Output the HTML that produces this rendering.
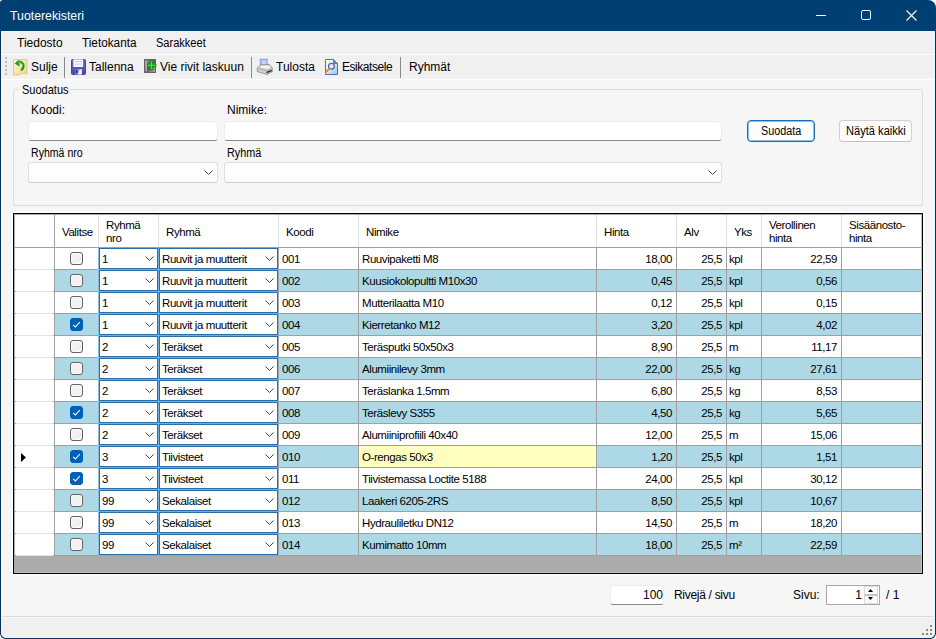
<!DOCTYPE html><html><head><meta charset="utf-8"><style>
*{box-sizing:border-box;margin:0;padding:0}
html,body{width:936px;height:639px;overflow:hidden;background:#ffffff}
body{position:relative;font-family:"Liberation Sans",sans-serif;font-size:12px;color:#000}
.a{position:absolute}
svg{display:block}
.t{position:absolute;white-space:nowrap;line-height:14px}
#win{position:absolute;left:0;top:0;width:936px;height:639px;background:#003f72;border-radius:3px 8px 6px 6px;overflow:hidden}
#client{position:absolute;left:1px;top:31px;width:934px;height:607px;background:#f6f6f6;border-left:1px solid #eaf6ff;border-top:1px solid #dcfbff;border-right:1px solid #e6f8ff;border-bottom:1px solid #f4f8fb;border-radius:0 0 5px 5px;overflow:hidden}
.chk{position:absolute;width:13px;height:13px;border:1px solid #626262;border-radius:3px;background:#f2f2f2;box-shadow:inset 0 0 0 1px #fbfbfb}
.chk.on{background:#005fb8;border-color:#005fb8;box-shadow:none}
.tb{position:absolute;background:#fff;border:1px solid #ececec;border-bottom:1px solid #8a8a8a;border-radius:3px}
.cb{position:absolute;background:#fdfdfd;border:1px solid #dedede;border-bottom-color:#cfcfcf;border-radius:3px}
.btn{position:absolute;background:#fdfdfd;border:1px solid #d0d0d0;border-bottom-color:#c0c0c0;border-radius:4px}
.g{font-size:11.5px;letter-spacing:-0.42px}
</style></head><body>
<div id="win">
<div class="t" style="left:10px;top:9px;color:#fff;font-size:12.3px">Tuoterekisteri</div>
<div class="a" style="left:816px;top:15px;width:10px;height:1px;background:#fff"></div>
<div class="a" style="left:861px;top:10px;width:10px;height:10px;border:1px solid #fff;border-radius:2px"></div>
<svg class="a" style="left:906px;top:10px" width="11" height="11" viewBox="0 0 11 11"><path d="M0.5 0.5 L10.5 10.5 M10.5 0.5 L0.5 10.5" stroke="#fff" stroke-width="1.1"/></svg>
<div class="a" style="left:0;top:31px;width:936px;height:608px;border:1px solid #0a3157;border-top:none;border-radius:0 0 6px 6px"></div>
<div id="client"></div>
</div>
<div class="a" style="left:2px;top:32px;width:932px;height:22px;background:#f0f0f0"></div>
<div class="a" style="left:2px;top:54px;width:932px;height:1px;background:#fdfdfd"></div>
<div class="t" style="left:17px;top:36px;transform:scaleX(1);transform-origin:0 0">Tiedosto</div>
<div class="t" style="left:82px;top:36px;transform:scaleX(0.98);transform-origin:0 0">Tietokanta</div>
<div class="t" style="left:156px;top:36px;transform:scaleX(0.92);transform-origin:0 0">Sarakkeet</div>
<div class="a" style="left:2px;top:55px;width:932px;height:21px;background:#f0f0f0"></div>
<div class="a" style="left:2px;top:76px;width:932px;height:3px;background:#f3f3f3"></div>
<div class="a" style="left:2px;top:79px;width:932px;height:1px;background:#fdfdfd"></div>
<div class="a" style="left:5px;top:57px;width:2px;height:2px;background:#bcbcbc"></div>
<div class="a" style="left:5px;top:61px;width:2px;height:2px;background:#bcbcbc"></div>
<div class="a" style="left:5px;top:65px;width:2px;height:2px;background:#bcbcbc"></div>
<div class="a" style="left:5px;top:69px;width:2px;height:2px;background:#bcbcbc"></div>
<div class="a" style="left:5px;top:73px;width:2px;height:2px;background:#bcbcbc"></div>
<div class="a" style="left:64px;top:57px;width:1px;height:21px;background:#8a8a8a"></div>
<div class="a" style="left:251px;top:57px;width:1px;height:21px;background:#8a8a8a"></div>
<div class="a" style="left:400px;top:57px;width:1px;height:21px;background:#8a8a8a"></div>
<svg class="a" style="left:12px;top:58px" width="17" height="18" viewBox="0 0 17 18">
<defs><linearGradient id="gy" x1="0" y1="0" x2="1" y2="1"><stop offset="0" stop-color="#fff8d0"/><stop offset="1" stop-color="#eed588"/></linearGradient></defs>
<path d="M1.5 1.5 H15 V15.5 H9 L8 17 H1.5 Z" fill="url(#gy)" stroke="#e2cc7a" stroke-width="1"/>
<path d="M5.5 4.3 C9 3.3 11.8 5.2 11.4 8.6 C11.2 10 10.6 11 9.8 11.7" fill="none" stroke="#1a961a" stroke-width="2.3" stroke-linecap="round"/>
<path d="M2.6 5.6 L7.2 1.8 L7.6 8.6 Z" fill="#1a961a"/>
<path d="M5.8 4.8 C8.5 4.2 10.5 5.4 10.5 7.8" fill="none" stroke="#7ee87e" stroke-width="1"/>
</svg>
<svg class="a" style="left:71px;top:59px" width="15" height="16" viewBox="0 0 15 16">
<defs><linearGradient id="gs" x1="0" y1="0" x2="0" y2="1"><stop offset="0" stop-color="#6868c4"/><stop offset="1" stop-color="#4a4ab0"/></linearGradient></defs>
<path d="M0.5 1.5 Q0.5 0.5 1.5 0.5 H13.5 Q14.5 0.5 14.5 1.5 V14.5 Q14.5 15.5 13.5 15.5 H1.5 Q0.5 15.5 0.5 14.5 Z" fill="url(#gs)" stroke="#4444a4" stroke-width="1"/>
<rect x="2.3" y="0.3" width="9.8" height="7.7" fill="#f6f6fc"/>
<rect x="3.5" y="2" width="7.5" height="1" fill="#c8c8d0"/>
<rect x="3.5" y="4.6" width="7.5" height="1" fill="#c8c8d0"/>
<path d="M4 15.5 V10 H11 V15.5 Z" fill="#8c8cdc"/>
<path d="M6.8 15.5 L8.6 10.6 H10.8 V15.5 Z" fill="#f6f6fc"/>
<rect x="4.6" y="10.6" width="1.9" height="3.6" fill="#2c2c94"/>
</svg>
<svg class="a" style="left:144px;top:59px" width="13" height="14" viewBox="0 0 13 14">
<defs><linearGradient id="gb" x1="0" y1="0" x2="1" y2="1"><stop offset="0" stop-color="#8a8a8a"/><stop offset="0.55" stop-color="#5a5a5a"/><stop offset="1" stop-color="#b4b4b4"/></linearGradient></defs>
<rect x="0.5" y="0.5" width="11" height="13" fill="url(#gb)" stroke="#646464" stroke-width="1"/>
<rect x="1.5" y="1.5" width="1.3" height="11" fill="#c0c0c0"/>
<path d="M7.5 1.3 V10.9 M3.1 6.2 H12.4" stroke="#129612" stroke-width="2.8"/>
<path d="M7.5 2.2 V10 M4 6.2 H11.6" stroke="#50e450" stroke-width="1.1"/>
</svg>
<svg class="a" style="left:256px;top:58px" width="18" height="18" viewBox="0 0 18 18">
<rect x="4.2" y="1.2" width="7" height="5.8" fill="#a4b4f4" stroke="#8c9ce0" stroke-width="0.8"/>
<rect x="6.2" y="2.6" width="4.2" height="4.4" fill="#c8d4ff"/>
<path d="M1.2 10.3 L5 6.5 H13.5 L16.3 9.8 V13.8 L11 16.5 L1.2 13.5 Z" fill="#d2d2d2" stroke="#8a8a8a" stroke-width="0.8"/>
<path d="M1.2 10.3 L11 12.8 L16.3 9.8" fill="none" stroke="#9c9c9c" stroke-width="0.8"/>
<path d="M5.5 7.8 H13 L15 9.8 L11 10.8 L4 9.3 Z" fill="#f2f2f2"/>
<path d="M10.5 14.6 L15.8 12.4" stroke="#262626" stroke-width="1.5"/>
</svg>
<svg class="a" style="left:323px;top:58px" width="17" height="18" viewBox="0 0 17 18">
<defs><linearGradient id="gp" x1="0" y1="0" x2="1" y2="1"><stop offset="0" stop-color="#ffffff"/><stop offset="0.4" stop-color="#e4f0fc"/><stop offset="1" stop-color="#8cc4f0"/></linearGradient></defs>
<path d="M2.5 1.5 H10.5 L14.5 5.5 V16.5 H2.5 Z" fill="url(#gp)" stroke="#5a6ca8" stroke-width="1"/>
<path d="M10.5 1.5 V5.5 H14.5 Z" fill="#6a86cc" stroke="#5a6ca8" stroke-width="0.8"/>
<circle cx="8.4" cy="8.2" r="2.9" fill="#dceeff" stroke="#56648e" stroke-width="1.2"/>
<path d="M6.2 10.6 L2.6 14.6" stroke="#d88a2a" stroke-width="1.7" stroke-linecap="round"/>
</svg>
<div class="t" style="left:31px;top:60px;letter-spacing:0">Sulje</div>
<div class="t" style="left:89px;top:60px;letter-spacing:0">Tallenna</div>
<div class="t" style="left:160px;top:60px;letter-spacing:0">Vie rivit laskuun</div>
<div class="t" style="left:276px;top:60px;letter-spacing:0">Tulosta</div>
<div class="t" style="left:342px;top:60px;letter-spacing:-0.45px">Esikatsele</div>
<div class="t" style="left:409px;top:60px;letter-spacing:0">Ryhmät</div>
<div class="a" style="left:13px;top:89px;width:910px;height:117px;border:1px solid #dcdcdc;border-radius:2px"></div>
<div class="a" style="left:19px;top:82px;width:50px;height:14px;background:#f6f6f6"></div>
<div class="t" style="left:22px;top:83px;font-size:12.8px;transform:scaleX(0.86);transform-origin:0 0">Suodatus</div>
<div class="t" style="left:31px;top:103px">Koodi:</div>
<div class="t" style="left:227px;top:103px">Nimike:</div>
<div class="tb" style="left:28px;top:121px;width:190px;height:20px"></div>
<div class="tb" style="left:224px;top:121px;width:498px;height:20px"></div>
<div class="t" style="left:31px;top:146px;transform:scaleX(0.88);transform-origin:0 0">Ryhmä nro</div>
<div class="t" style="left:227px;top:146px;transform:scaleX(0.9);transform-origin:0 0">Ryhmä</div>
<div class="cb" style="left:28px;top:162px;width:190px;height:21px"></div>
<div class="cb" style="left:224px;top:162px;width:498px;height:21px"></div>
<div class="a" style="left:204px;top:170px"><svg width="9" height="5" viewBox="0 0 9 5"><path d="M0.5 0.5 L4.5 4.5 L8.5 0.5" fill="none" stroke="#444" stroke-width="1"/></svg></div>
<div class="a" style="left:708px;top:170px"><svg width="9" height="5" viewBox="0 0 9 5"><path d="M0.5 0.5 L4.5 4.5 L8.5 0.5" fill="none" stroke="#444" stroke-width="1"/></svg></div>
<div class="btn" style="left:747px;top:120px;width:68px;height:22px;border:1px solid #1a6cb4;border-radius:4px;box-shadow:inset 0 0 0 1px #8ec0ea"></div>
<div class="t" style="left:761px;top:124px;transform:scaleX(0.9);transform-origin:0 0">Suodata</div>
<div class="btn" style="left:839px;top:120px;width:73px;height:22px"></div>
<div class="t" style="left:846px;top:124px;transform:scaleX(0.925);transform-origin:0 0">Näytä kaikki</div>
<div class="a" style="left:13px;top:213px;width:910px;height:361px;border:1px solid #000;background:#ababab"></div>
<div class="a" style="left:14px;top:214px;width:908px;height:34px;background:#fff"></div>
<div class="a" style="left:14px;top:247px;width:908px;height:1px;background:#a0a0a0"></div>
<div class="a" style="left:54px;top:214px;width:1px;height:33px;background:#a0a0a0"></div>
<div class="a" style="left:98px;top:214px;width:1px;height:33px;background:#e0e0e0"></div>
<div class="a" style="left:158px;top:214px;width:1px;height:33px;background:#e0e0e0"></div>
<div class="a" style="left:278px;top:214px;width:1px;height:33px;background:#e0e0e0"></div>
<div class="a" style="left:358px;top:214px;width:1px;height:33px;background:#e0e0e0"></div>
<div class="a" style="left:596px;top:214px;width:1px;height:33px;background:#e0e0e0"></div>
<div class="a" style="left:676px;top:214px;width:1px;height:33px;background:#e0e0e0"></div>
<div class="a" style="left:726px;top:214px;width:1px;height:33px;background:#e0e0e0"></div>
<div class="a" style="left:761px;top:214px;width:1px;height:33px;background:#e0e0e0"></div>
<div class="a" style="left:841px;top:214px;width:1px;height:33px;background:#e0e0e0"></div>
<div class="t g" style="left:62px;top:226px;line-height:13px">Valitse</div>
<div class="t g" style="left:106px;top:219px;line-height:13px">Ryhmä<br>nro</div>
<div class="t g" style="left:166px;top:226px;line-height:13px">Ryhmä</div>
<div class="t g" style="left:286px;top:226px;line-height:13px">Koodi</div>
<div class="t g" style="left:366px;top:226px;line-height:13px">Nimike</div>
<div class="t g" style="left:604px;top:226px;line-height:13px">Hinta</div>
<div class="t g" style="left:684px;top:226px;line-height:13px">Alv</div>
<div class="t g" style="left:734px;top:226px;line-height:13px">Yks</div>
<div class="t g" style="left:769px;top:219px;line-height:13px">Verollinen<br>hinta</div>
<div class="t g" style="left:849px;top:219px;line-height:13px">Sisäänosto-<br>hinta</div>
<div class="a" style="left:14px;top:248px;width:40px;height:21px;background:#fff"></div>
<div class="a" style="left:16px;top:269px;width:37px;height:1px;background:#e4e4e4"></div>
<div class="a" style="left:54px;top:248px;width:1px;height:22px;background:#a0a0a0"></div>
<div class="a" style="left:55px;top:248px;width:867px;height:21px;background:#ffffff"></div>
<div class="a" style="left:55px;top:269px;width:867px;height:1px;background:#a0a0a0"></div>
<div class="a" style="left:98px;top:248px;width:1px;height:22px;background:#a0a0a0"></div>
<div class="a" style="left:158px;top:248px;width:1px;height:22px;background:#a0a0a0"></div>
<div class="a" style="left:278px;top:248px;width:1px;height:22px;background:#a0a0a0"></div>
<div class="a" style="left:358px;top:248px;width:1px;height:22px;background:#a0a0a0"></div>
<div class="a" style="left:596px;top:248px;width:1px;height:22px;background:#a0a0a0"></div>
<div class="a" style="left:676px;top:248px;width:1px;height:22px;background:#a0a0a0"></div>
<div class="a" style="left:726px;top:248px;width:1px;height:22px;background:#a0a0a0"></div>
<div class="a" style="left:761px;top:248px;width:1px;height:22px;background:#a0a0a0"></div>
<div class="a" style="left:841px;top:248px;width:1px;height:22px;background:#a0a0a0"></div>
<div class="chk" style="left:70px;top:252px"></div>
<div class="a" style="left:98px;top:269px;width:180px;height:1px;background:#6eaee0"></div>
<div class="a" style="left:98px;top:248px;width:1px;height:22px;background:#8dbde0"></div>
<div class="a" style="left:158px;top:248px;width:1px;height:22px;background:#6eaee0"></div>
<div class="a" style="left:278px;top:248px;width:1px;height:22px;background:#98a8b4"></div>
<div class="a" style="left:99px;top:248px;width:59px;height:21px;background:#fff;border:1px solid #2a6eaa"></div>
<div class="t g" style="left:102px;top:252px">1</div>
<div class="a" style="left:145px;top:256px"><svg width="9" height="5" viewBox="0 0 9 5"><path d="M0.5 0.5 L4.5 4.5 L8.5 0.5" fill="none" stroke="#444" stroke-width="1"/></svg></div>
<div class="a" style="left:159px;top:248px;width:119px;height:21px;background:#fff;border:1px solid #2a6eaa"></div>
<div class="t g" style="left:162px;top:252px">Ruuvit ja muutterit</div>
<div class="a" style="left:265px;top:256px"><svg width="9" height="5" viewBox="0 0 9 5"><path d="M0.5 0.5 L4.5 4.5 L8.5 0.5" fill="none" stroke="#444" stroke-width="1"/></svg></div>
<div class="t g" style="left:282px;top:252px">001</div>
<div class="t g" style="left:362px;top:252px">Ruuvipaketti M8</div>
<div class="t g" style="left:597px;top:252px;width:75px;text-align:right">18,00</div>
<div class="t g" style="left:677px;top:252px;width:45px;text-align:right">25,5</div>
<div class="t g" style="left:729px;top:252px">kpl</div>
<div class="t g" style="left:762px;top:252px;width:75px;text-align:right">22,59</div>
<div class="a" style="left:14px;top:270px;width:40px;height:21px;background:#fff"></div>
<div class="a" style="left:16px;top:291px;width:37px;height:1px;background:#e4e4e4"></div>
<div class="a" style="left:54px;top:270px;width:1px;height:22px;background:#a0a0a0"></div>
<div class="a" style="left:55px;top:270px;width:867px;height:21px;background:#add8e6"></div>
<div class="a" style="left:55px;top:291px;width:867px;height:1px;background:#a0a0a0"></div>
<div class="a" style="left:98px;top:270px;width:1px;height:22px;background:#a0a0a0"></div>
<div class="a" style="left:158px;top:270px;width:1px;height:22px;background:#a0a0a0"></div>
<div class="a" style="left:278px;top:270px;width:1px;height:22px;background:#a0a0a0"></div>
<div class="a" style="left:358px;top:270px;width:1px;height:22px;background:#a0a0a0"></div>
<div class="a" style="left:596px;top:270px;width:1px;height:22px;background:#a0a0a0"></div>
<div class="a" style="left:676px;top:270px;width:1px;height:22px;background:#a0a0a0"></div>
<div class="a" style="left:726px;top:270px;width:1px;height:22px;background:#a0a0a0"></div>
<div class="a" style="left:761px;top:270px;width:1px;height:22px;background:#a0a0a0"></div>
<div class="a" style="left:841px;top:270px;width:1px;height:22px;background:#a0a0a0"></div>
<div class="chk" style="left:70px;top:274px"></div>
<div class="a" style="left:98px;top:291px;width:180px;height:1px;background:#6eaee0"></div>
<div class="a" style="left:98px;top:270px;width:1px;height:22px;background:#8dbde0"></div>
<div class="a" style="left:158px;top:270px;width:1px;height:22px;background:#6eaee0"></div>
<div class="a" style="left:278px;top:270px;width:1px;height:22px;background:#98a8b4"></div>
<div class="a" style="left:99px;top:270px;width:59px;height:21px;background:#fff;border:1px solid #2a6eaa"></div>
<div class="t g" style="left:102px;top:274px">1</div>
<div class="a" style="left:145px;top:278px"><svg width="9" height="5" viewBox="0 0 9 5"><path d="M0.5 0.5 L4.5 4.5 L8.5 0.5" fill="none" stroke="#444" stroke-width="1"/></svg></div>
<div class="a" style="left:159px;top:270px;width:119px;height:21px;background:#fff;border:1px solid #2a6eaa"></div>
<div class="t g" style="left:162px;top:274px">Ruuvit ja muutterit</div>
<div class="a" style="left:265px;top:278px"><svg width="9" height="5" viewBox="0 0 9 5"><path d="M0.5 0.5 L4.5 4.5 L8.5 0.5" fill="none" stroke="#444" stroke-width="1"/></svg></div>
<div class="t g" style="left:282px;top:274px">002</div>
<div class="t g" style="left:362px;top:274px">Kuusiokolopultti M10x30</div>
<div class="t g" style="left:597px;top:274px;width:75px;text-align:right">0,45</div>
<div class="t g" style="left:677px;top:274px;width:45px;text-align:right">25,5</div>
<div class="t g" style="left:729px;top:274px">kpl</div>
<div class="t g" style="left:762px;top:274px;width:75px;text-align:right">0,56</div>
<div class="a" style="left:14px;top:292px;width:40px;height:21px;background:#fff"></div>
<div class="a" style="left:16px;top:313px;width:37px;height:1px;background:#e4e4e4"></div>
<div class="a" style="left:54px;top:292px;width:1px;height:22px;background:#a0a0a0"></div>
<div class="a" style="left:55px;top:292px;width:867px;height:21px;background:#ffffff"></div>
<div class="a" style="left:55px;top:313px;width:867px;height:1px;background:#a0a0a0"></div>
<div class="a" style="left:98px;top:292px;width:1px;height:22px;background:#a0a0a0"></div>
<div class="a" style="left:158px;top:292px;width:1px;height:22px;background:#a0a0a0"></div>
<div class="a" style="left:278px;top:292px;width:1px;height:22px;background:#a0a0a0"></div>
<div class="a" style="left:358px;top:292px;width:1px;height:22px;background:#a0a0a0"></div>
<div class="a" style="left:596px;top:292px;width:1px;height:22px;background:#a0a0a0"></div>
<div class="a" style="left:676px;top:292px;width:1px;height:22px;background:#a0a0a0"></div>
<div class="a" style="left:726px;top:292px;width:1px;height:22px;background:#a0a0a0"></div>
<div class="a" style="left:761px;top:292px;width:1px;height:22px;background:#a0a0a0"></div>
<div class="a" style="left:841px;top:292px;width:1px;height:22px;background:#a0a0a0"></div>
<div class="chk" style="left:70px;top:296px"></div>
<div class="a" style="left:98px;top:313px;width:180px;height:1px;background:#6eaee0"></div>
<div class="a" style="left:98px;top:292px;width:1px;height:22px;background:#8dbde0"></div>
<div class="a" style="left:158px;top:292px;width:1px;height:22px;background:#6eaee0"></div>
<div class="a" style="left:278px;top:292px;width:1px;height:22px;background:#98a8b4"></div>
<div class="a" style="left:99px;top:292px;width:59px;height:21px;background:#fff;border:1px solid #2a6eaa"></div>
<div class="t g" style="left:102px;top:296px">1</div>
<div class="a" style="left:145px;top:300px"><svg width="9" height="5" viewBox="0 0 9 5"><path d="M0.5 0.5 L4.5 4.5 L8.5 0.5" fill="none" stroke="#444" stroke-width="1"/></svg></div>
<div class="a" style="left:159px;top:292px;width:119px;height:21px;background:#fff;border:1px solid #2a6eaa"></div>
<div class="t g" style="left:162px;top:296px">Ruuvit ja muutterit</div>
<div class="a" style="left:265px;top:300px"><svg width="9" height="5" viewBox="0 0 9 5"><path d="M0.5 0.5 L4.5 4.5 L8.5 0.5" fill="none" stroke="#444" stroke-width="1"/></svg></div>
<div class="t g" style="left:282px;top:296px">003</div>
<div class="t g" style="left:362px;top:296px">Mutterilaatta M10</div>
<div class="t g" style="left:597px;top:296px;width:75px;text-align:right">0,12</div>
<div class="t g" style="left:677px;top:296px;width:45px;text-align:right">25,5</div>
<div class="t g" style="left:729px;top:296px">kpl</div>
<div class="t g" style="left:762px;top:296px;width:75px;text-align:right">0,15</div>
<div class="a" style="left:14px;top:314px;width:40px;height:21px;background:#fff"></div>
<div class="a" style="left:16px;top:335px;width:37px;height:1px;background:#e4e4e4"></div>
<div class="a" style="left:54px;top:314px;width:1px;height:22px;background:#a0a0a0"></div>
<div class="a" style="left:55px;top:314px;width:867px;height:21px;background:#add8e6"></div>
<div class="a" style="left:55px;top:335px;width:867px;height:1px;background:#a0a0a0"></div>
<div class="a" style="left:98px;top:314px;width:1px;height:22px;background:#a0a0a0"></div>
<div class="a" style="left:158px;top:314px;width:1px;height:22px;background:#a0a0a0"></div>
<div class="a" style="left:278px;top:314px;width:1px;height:22px;background:#a0a0a0"></div>
<div class="a" style="left:358px;top:314px;width:1px;height:22px;background:#a0a0a0"></div>
<div class="a" style="left:596px;top:314px;width:1px;height:22px;background:#a0a0a0"></div>
<div class="a" style="left:676px;top:314px;width:1px;height:22px;background:#a0a0a0"></div>
<div class="a" style="left:726px;top:314px;width:1px;height:22px;background:#a0a0a0"></div>
<div class="a" style="left:761px;top:314px;width:1px;height:22px;background:#a0a0a0"></div>
<div class="a" style="left:841px;top:314px;width:1px;height:22px;background:#a0a0a0"></div>
<div class="chk on" style="left:70px;top:318px"></div>
<svg class="a" style="left:70px;top:318px" width="13" height="13" viewBox="0 0 13 13"><path d="M3.2 6.8 L5.4 9 L9.8 4.2" fill="none" stroke="#fff" stroke-width="1.1"/></svg>
<div class="a" style="left:98px;top:335px;width:180px;height:1px;background:#6eaee0"></div>
<div class="a" style="left:98px;top:314px;width:1px;height:22px;background:#8dbde0"></div>
<div class="a" style="left:158px;top:314px;width:1px;height:22px;background:#6eaee0"></div>
<div class="a" style="left:278px;top:314px;width:1px;height:22px;background:#98a8b4"></div>
<div class="a" style="left:99px;top:314px;width:59px;height:21px;background:#fff;border:1px solid #2a6eaa"></div>
<div class="t g" style="left:102px;top:318px">1</div>
<div class="a" style="left:145px;top:322px"><svg width="9" height="5" viewBox="0 0 9 5"><path d="M0.5 0.5 L4.5 4.5 L8.5 0.5" fill="none" stroke="#444" stroke-width="1"/></svg></div>
<div class="a" style="left:159px;top:314px;width:119px;height:21px;background:#fff;border:1px solid #2a6eaa"></div>
<div class="t g" style="left:162px;top:318px">Ruuvit ja muutterit</div>
<div class="a" style="left:265px;top:322px"><svg width="9" height="5" viewBox="0 0 9 5"><path d="M0.5 0.5 L4.5 4.5 L8.5 0.5" fill="none" stroke="#444" stroke-width="1"/></svg></div>
<div class="t g" style="left:282px;top:318px">004</div>
<div class="t g" style="left:362px;top:318px">Kierretanko M12</div>
<div class="t g" style="left:597px;top:318px;width:75px;text-align:right">3,20</div>
<div class="t g" style="left:677px;top:318px;width:45px;text-align:right">25,5</div>
<div class="t g" style="left:729px;top:318px">kpl</div>
<div class="t g" style="left:762px;top:318px;width:75px;text-align:right">4,02</div>
<div class="a" style="left:14px;top:336px;width:40px;height:21px;background:#fff"></div>
<div class="a" style="left:16px;top:357px;width:37px;height:1px;background:#e4e4e4"></div>
<div class="a" style="left:54px;top:336px;width:1px;height:22px;background:#a0a0a0"></div>
<div class="a" style="left:55px;top:336px;width:867px;height:21px;background:#ffffff"></div>
<div class="a" style="left:55px;top:357px;width:867px;height:1px;background:#a0a0a0"></div>
<div class="a" style="left:98px;top:336px;width:1px;height:22px;background:#a0a0a0"></div>
<div class="a" style="left:158px;top:336px;width:1px;height:22px;background:#a0a0a0"></div>
<div class="a" style="left:278px;top:336px;width:1px;height:22px;background:#a0a0a0"></div>
<div class="a" style="left:358px;top:336px;width:1px;height:22px;background:#a0a0a0"></div>
<div class="a" style="left:596px;top:336px;width:1px;height:22px;background:#a0a0a0"></div>
<div class="a" style="left:676px;top:336px;width:1px;height:22px;background:#a0a0a0"></div>
<div class="a" style="left:726px;top:336px;width:1px;height:22px;background:#a0a0a0"></div>
<div class="a" style="left:761px;top:336px;width:1px;height:22px;background:#a0a0a0"></div>
<div class="a" style="left:841px;top:336px;width:1px;height:22px;background:#a0a0a0"></div>
<div class="chk" style="left:70px;top:340px"></div>
<div class="a" style="left:98px;top:357px;width:180px;height:1px;background:#6eaee0"></div>
<div class="a" style="left:98px;top:336px;width:1px;height:22px;background:#8dbde0"></div>
<div class="a" style="left:158px;top:336px;width:1px;height:22px;background:#6eaee0"></div>
<div class="a" style="left:278px;top:336px;width:1px;height:22px;background:#98a8b4"></div>
<div class="a" style="left:99px;top:336px;width:59px;height:21px;background:#fff;border:1px solid #2a6eaa"></div>
<div class="t g" style="left:102px;top:340px">2</div>
<div class="a" style="left:145px;top:344px"><svg width="9" height="5" viewBox="0 0 9 5"><path d="M0.5 0.5 L4.5 4.5 L8.5 0.5" fill="none" stroke="#444" stroke-width="1"/></svg></div>
<div class="a" style="left:159px;top:336px;width:119px;height:21px;background:#fff;border:1px solid #2a6eaa"></div>
<div class="t g" style="left:162px;top:340px">Teräkset</div>
<div class="a" style="left:265px;top:344px"><svg width="9" height="5" viewBox="0 0 9 5"><path d="M0.5 0.5 L4.5 4.5 L8.5 0.5" fill="none" stroke="#444" stroke-width="1"/></svg></div>
<div class="t g" style="left:282px;top:340px">005</div>
<div class="t g" style="left:362px;top:340px">Teräsputki 50x50x3</div>
<div class="t g" style="left:597px;top:340px;width:75px;text-align:right">8,90</div>
<div class="t g" style="left:677px;top:340px;width:45px;text-align:right">25,5</div>
<div class="t g" style="left:729px;top:340px">m</div>
<div class="t g" style="left:762px;top:340px;width:75px;text-align:right">11,17</div>
<div class="a" style="left:14px;top:358px;width:40px;height:21px;background:#fff"></div>
<div class="a" style="left:16px;top:379px;width:37px;height:1px;background:#e4e4e4"></div>
<div class="a" style="left:54px;top:358px;width:1px;height:22px;background:#a0a0a0"></div>
<div class="a" style="left:55px;top:358px;width:867px;height:21px;background:#add8e6"></div>
<div class="a" style="left:55px;top:379px;width:867px;height:1px;background:#a0a0a0"></div>
<div class="a" style="left:98px;top:358px;width:1px;height:22px;background:#a0a0a0"></div>
<div class="a" style="left:158px;top:358px;width:1px;height:22px;background:#a0a0a0"></div>
<div class="a" style="left:278px;top:358px;width:1px;height:22px;background:#a0a0a0"></div>
<div class="a" style="left:358px;top:358px;width:1px;height:22px;background:#a0a0a0"></div>
<div class="a" style="left:596px;top:358px;width:1px;height:22px;background:#a0a0a0"></div>
<div class="a" style="left:676px;top:358px;width:1px;height:22px;background:#a0a0a0"></div>
<div class="a" style="left:726px;top:358px;width:1px;height:22px;background:#a0a0a0"></div>
<div class="a" style="left:761px;top:358px;width:1px;height:22px;background:#a0a0a0"></div>
<div class="a" style="left:841px;top:358px;width:1px;height:22px;background:#a0a0a0"></div>
<div class="chk" style="left:70px;top:362px"></div>
<div class="a" style="left:98px;top:379px;width:180px;height:1px;background:#6eaee0"></div>
<div class="a" style="left:98px;top:358px;width:1px;height:22px;background:#8dbde0"></div>
<div class="a" style="left:158px;top:358px;width:1px;height:22px;background:#6eaee0"></div>
<div class="a" style="left:278px;top:358px;width:1px;height:22px;background:#98a8b4"></div>
<div class="a" style="left:99px;top:358px;width:59px;height:21px;background:#fff;border:1px solid #2a6eaa"></div>
<div class="t g" style="left:102px;top:362px">2</div>
<div class="a" style="left:145px;top:366px"><svg width="9" height="5" viewBox="0 0 9 5"><path d="M0.5 0.5 L4.5 4.5 L8.5 0.5" fill="none" stroke="#444" stroke-width="1"/></svg></div>
<div class="a" style="left:159px;top:358px;width:119px;height:21px;background:#fff;border:1px solid #2a6eaa"></div>
<div class="t g" style="left:162px;top:362px">Teräkset</div>
<div class="a" style="left:265px;top:366px"><svg width="9" height="5" viewBox="0 0 9 5"><path d="M0.5 0.5 L4.5 4.5 L8.5 0.5" fill="none" stroke="#444" stroke-width="1"/></svg></div>
<div class="t g" style="left:282px;top:362px">006</div>
<div class="t g" style="left:362px;top:362px">Alumiinilevy 3mm</div>
<div class="t g" style="left:597px;top:362px;width:75px;text-align:right">22,00</div>
<div class="t g" style="left:677px;top:362px;width:45px;text-align:right">25,5</div>
<div class="t g" style="left:729px;top:362px">kg</div>
<div class="t g" style="left:762px;top:362px;width:75px;text-align:right">27,61</div>
<div class="a" style="left:14px;top:380px;width:40px;height:21px;background:#fff"></div>
<div class="a" style="left:16px;top:401px;width:37px;height:1px;background:#e4e4e4"></div>
<div class="a" style="left:54px;top:380px;width:1px;height:22px;background:#a0a0a0"></div>
<div class="a" style="left:55px;top:380px;width:867px;height:21px;background:#ffffff"></div>
<div class="a" style="left:55px;top:401px;width:867px;height:1px;background:#a0a0a0"></div>
<div class="a" style="left:98px;top:380px;width:1px;height:22px;background:#a0a0a0"></div>
<div class="a" style="left:158px;top:380px;width:1px;height:22px;background:#a0a0a0"></div>
<div class="a" style="left:278px;top:380px;width:1px;height:22px;background:#a0a0a0"></div>
<div class="a" style="left:358px;top:380px;width:1px;height:22px;background:#a0a0a0"></div>
<div class="a" style="left:596px;top:380px;width:1px;height:22px;background:#a0a0a0"></div>
<div class="a" style="left:676px;top:380px;width:1px;height:22px;background:#a0a0a0"></div>
<div class="a" style="left:726px;top:380px;width:1px;height:22px;background:#a0a0a0"></div>
<div class="a" style="left:761px;top:380px;width:1px;height:22px;background:#a0a0a0"></div>
<div class="a" style="left:841px;top:380px;width:1px;height:22px;background:#a0a0a0"></div>
<div class="chk" style="left:70px;top:384px"></div>
<div class="a" style="left:98px;top:401px;width:180px;height:1px;background:#6eaee0"></div>
<div class="a" style="left:98px;top:380px;width:1px;height:22px;background:#8dbde0"></div>
<div class="a" style="left:158px;top:380px;width:1px;height:22px;background:#6eaee0"></div>
<div class="a" style="left:278px;top:380px;width:1px;height:22px;background:#98a8b4"></div>
<div class="a" style="left:99px;top:380px;width:59px;height:21px;background:#fff;border:1px solid #2a6eaa"></div>
<div class="t g" style="left:102px;top:384px">2</div>
<div class="a" style="left:145px;top:388px"><svg width="9" height="5" viewBox="0 0 9 5"><path d="M0.5 0.5 L4.5 4.5 L8.5 0.5" fill="none" stroke="#444" stroke-width="1"/></svg></div>
<div class="a" style="left:159px;top:380px;width:119px;height:21px;background:#fff;border:1px solid #2a6eaa"></div>
<div class="t g" style="left:162px;top:384px">Teräkset</div>
<div class="a" style="left:265px;top:388px"><svg width="9" height="5" viewBox="0 0 9 5"><path d="M0.5 0.5 L4.5 4.5 L8.5 0.5" fill="none" stroke="#444" stroke-width="1"/></svg></div>
<div class="t g" style="left:282px;top:384px">007</div>
<div class="t g" style="left:362px;top:384px">Teräslanka 1.5mm</div>
<div class="t g" style="left:597px;top:384px;width:75px;text-align:right">6,80</div>
<div class="t g" style="left:677px;top:384px;width:45px;text-align:right">25,5</div>
<div class="t g" style="left:729px;top:384px">kg</div>
<div class="t g" style="left:762px;top:384px;width:75px;text-align:right">8,53</div>
<div class="a" style="left:14px;top:402px;width:40px;height:21px;background:#fff"></div>
<div class="a" style="left:16px;top:423px;width:37px;height:1px;background:#e4e4e4"></div>
<div class="a" style="left:54px;top:402px;width:1px;height:22px;background:#a0a0a0"></div>
<div class="a" style="left:55px;top:402px;width:867px;height:21px;background:#add8e6"></div>
<div class="a" style="left:55px;top:423px;width:867px;height:1px;background:#a0a0a0"></div>
<div class="a" style="left:98px;top:402px;width:1px;height:22px;background:#a0a0a0"></div>
<div class="a" style="left:158px;top:402px;width:1px;height:22px;background:#a0a0a0"></div>
<div class="a" style="left:278px;top:402px;width:1px;height:22px;background:#a0a0a0"></div>
<div class="a" style="left:358px;top:402px;width:1px;height:22px;background:#a0a0a0"></div>
<div class="a" style="left:596px;top:402px;width:1px;height:22px;background:#a0a0a0"></div>
<div class="a" style="left:676px;top:402px;width:1px;height:22px;background:#a0a0a0"></div>
<div class="a" style="left:726px;top:402px;width:1px;height:22px;background:#a0a0a0"></div>
<div class="a" style="left:761px;top:402px;width:1px;height:22px;background:#a0a0a0"></div>
<div class="a" style="left:841px;top:402px;width:1px;height:22px;background:#a0a0a0"></div>
<div class="chk on" style="left:70px;top:406px"></div>
<svg class="a" style="left:70px;top:406px" width="13" height="13" viewBox="0 0 13 13"><path d="M3.2 6.8 L5.4 9 L9.8 4.2" fill="none" stroke="#fff" stroke-width="1.1"/></svg>
<div class="a" style="left:98px;top:423px;width:180px;height:1px;background:#6eaee0"></div>
<div class="a" style="left:98px;top:402px;width:1px;height:22px;background:#8dbde0"></div>
<div class="a" style="left:158px;top:402px;width:1px;height:22px;background:#6eaee0"></div>
<div class="a" style="left:278px;top:402px;width:1px;height:22px;background:#98a8b4"></div>
<div class="a" style="left:99px;top:402px;width:59px;height:21px;background:#fff;border:1px solid #2a6eaa"></div>
<div class="t g" style="left:102px;top:406px">2</div>
<div class="a" style="left:145px;top:410px"><svg width="9" height="5" viewBox="0 0 9 5"><path d="M0.5 0.5 L4.5 4.5 L8.5 0.5" fill="none" stroke="#444" stroke-width="1"/></svg></div>
<div class="a" style="left:159px;top:402px;width:119px;height:21px;background:#fff;border:1px solid #2a6eaa"></div>
<div class="t g" style="left:162px;top:406px">Teräkset</div>
<div class="a" style="left:265px;top:410px"><svg width="9" height="5" viewBox="0 0 9 5"><path d="M0.5 0.5 L4.5 4.5 L8.5 0.5" fill="none" stroke="#444" stroke-width="1"/></svg></div>
<div class="t g" style="left:282px;top:406px">008</div>
<div class="t g" style="left:362px;top:406px">Teräslevy S355</div>
<div class="t g" style="left:597px;top:406px;width:75px;text-align:right">4,50</div>
<div class="t g" style="left:677px;top:406px;width:45px;text-align:right">25,5</div>
<div class="t g" style="left:729px;top:406px">kg</div>
<div class="t g" style="left:762px;top:406px;width:75px;text-align:right">5,65</div>
<div class="a" style="left:14px;top:424px;width:40px;height:21px;background:#fff"></div>
<div class="a" style="left:16px;top:445px;width:37px;height:1px;background:#e4e4e4"></div>
<div class="a" style="left:54px;top:424px;width:1px;height:22px;background:#a0a0a0"></div>
<div class="a" style="left:55px;top:424px;width:867px;height:21px;background:#ffffff"></div>
<div class="a" style="left:55px;top:445px;width:867px;height:1px;background:#a0a0a0"></div>
<div class="a" style="left:98px;top:424px;width:1px;height:22px;background:#a0a0a0"></div>
<div class="a" style="left:158px;top:424px;width:1px;height:22px;background:#a0a0a0"></div>
<div class="a" style="left:278px;top:424px;width:1px;height:22px;background:#a0a0a0"></div>
<div class="a" style="left:358px;top:424px;width:1px;height:22px;background:#a0a0a0"></div>
<div class="a" style="left:596px;top:424px;width:1px;height:22px;background:#a0a0a0"></div>
<div class="a" style="left:676px;top:424px;width:1px;height:22px;background:#a0a0a0"></div>
<div class="a" style="left:726px;top:424px;width:1px;height:22px;background:#a0a0a0"></div>
<div class="a" style="left:761px;top:424px;width:1px;height:22px;background:#a0a0a0"></div>
<div class="a" style="left:841px;top:424px;width:1px;height:22px;background:#a0a0a0"></div>
<div class="chk" style="left:70px;top:428px"></div>
<div class="a" style="left:98px;top:445px;width:180px;height:1px;background:#6eaee0"></div>
<div class="a" style="left:98px;top:424px;width:1px;height:22px;background:#8dbde0"></div>
<div class="a" style="left:158px;top:424px;width:1px;height:22px;background:#6eaee0"></div>
<div class="a" style="left:278px;top:424px;width:1px;height:22px;background:#98a8b4"></div>
<div class="a" style="left:99px;top:424px;width:59px;height:21px;background:#fff;border:1px solid #2a6eaa"></div>
<div class="t g" style="left:102px;top:428px">2</div>
<div class="a" style="left:145px;top:432px"><svg width="9" height="5" viewBox="0 0 9 5"><path d="M0.5 0.5 L4.5 4.5 L8.5 0.5" fill="none" stroke="#444" stroke-width="1"/></svg></div>
<div class="a" style="left:159px;top:424px;width:119px;height:21px;background:#fff;border:1px solid #2a6eaa"></div>
<div class="t g" style="left:162px;top:428px">Teräkset</div>
<div class="a" style="left:265px;top:432px"><svg width="9" height="5" viewBox="0 0 9 5"><path d="M0.5 0.5 L4.5 4.5 L8.5 0.5" fill="none" stroke="#444" stroke-width="1"/></svg></div>
<div class="t g" style="left:282px;top:428px">009</div>
<div class="t g" style="left:362px;top:428px">Alumiiniprofiili 40x40</div>
<div class="t g" style="left:597px;top:428px;width:75px;text-align:right">12,00</div>
<div class="t g" style="left:677px;top:428px;width:45px;text-align:right">25,5</div>
<div class="t g" style="left:729px;top:428px">m</div>
<div class="t g" style="left:762px;top:428px;width:75px;text-align:right">15,06</div>
<div class="a" style="left:14px;top:446px;width:40px;height:21px;background:#fff"></div>
<div class="a" style="left:16px;top:467px;width:37px;height:1px;background:#e4e4e4"></div>
<div class="a" style="left:54px;top:446px;width:1px;height:22px;background:#a0a0a0"></div>
<div class="a" style="left:55px;top:446px;width:867px;height:21px;background:#add8e6"></div>
<div class="a" style="left:55px;top:467px;width:867px;height:1px;background:#a0a0a0"></div>
<div class="a" style="left:98px;top:446px;width:1px;height:22px;background:#a0a0a0"></div>
<div class="a" style="left:158px;top:446px;width:1px;height:22px;background:#a0a0a0"></div>
<div class="a" style="left:278px;top:446px;width:1px;height:22px;background:#a0a0a0"></div>
<div class="a" style="left:358px;top:446px;width:1px;height:22px;background:#a0a0a0"></div>
<div class="a" style="left:596px;top:446px;width:1px;height:22px;background:#a0a0a0"></div>
<div class="a" style="left:676px;top:446px;width:1px;height:22px;background:#a0a0a0"></div>
<div class="a" style="left:726px;top:446px;width:1px;height:22px;background:#a0a0a0"></div>
<div class="a" style="left:761px;top:446px;width:1px;height:22px;background:#a0a0a0"></div>
<div class="a" style="left:841px;top:446px;width:1px;height:22px;background:#a0a0a0"></div>
<div class="a" style="left:359px;top:446px;width:237px;height:21px;background:#ffffc0"></div>
<svg class="a" style="left:21px;top:453px" width="5" height="9" viewBox="0 0 5 9"><path d="M0 0 L5 4.5 L0 9 Z" fill="#000"/></svg>
<div class="chk on" style="left:70px;top:450px"></div>
<svg class="a" style="left:70px;top:450px" width="13" height="13" viewBox="0 0 13 13"><path d="M3.2 6.8 L5.4 9 L9.8 4.2" fill="none" stroke="#fff" stroke-width="1.1"/></svg>
<div class="a" style="left:98px;top:467px;width:180px;height:1px;background:#6eaee0"></div>
<div class="a" style="left:98px;top:446px;width:1px;height:22px;background:#8dbde0"></div>
<div class="a" style="left:158px;top:446px;width:1px;height:22px;background:#6eaee0"></div>
<div class="a" style="left:278px;top:446px;width:1px;height:22px;background:#98a8b4"></div>
<div class="a" style="left:99px;top:446px;width:59px;height:21px;background:#fff;border:1px solid #2a6eaa"></div>
<div class="t g" style="left:102px;top:450px">3</div>
<div class="a" style="left:145px;top:454px"><svg width="9" height="5" viewBox="0 0 9 5"><path d="M0.5 0.5 L4.5 4.5 L8.5 0.5" fill="none" stroke="#444" stroke-width="1"/></svg></div>
<div class="a" style="left:159px;top:446px;width:119px;height:21px;background:#fff;border:1px solid #2a6eaa"></div>
<div class="t g" style="left:162px;top:450px">Tiivisteet</div>
<div class="a" style="left:265px;top:454px"><svg width="9" height="5" viewBox="0 0 9 5"><path d="M0.5 0.5 L4.5 4.5 L8.5 0.5" fill="none" stroke="#444" stroke-width="1"/></svg></div>
<div class="t g" style="left:282px;top:450px">010</div>
<div class="t g" style="left:362px;top:450px">O-rengas 50x3</div>
<div class="t g" style="left:597px;top:450px;width:75px;text-align:right">1,20</div>
<div class="t g" style="left:677px;top:450px;width:45px;text-align:right">25,5</div>
<div class="t g" style="left:729px;top:450px">kpl</div>
<div class="t g" style="left:762px;top:450px;width:75px;text-align:right">1,51</div>
<div class="a" style="left:14px;top:468px;width:40px;height:21px;background:#fff"></div>
<div class="a" style="left:16px;top:489px;width:37px;height:1px;background:#e4e4e4"></div>
<div class="a" style="left:54px;top:468px;width:1px;height:22px;background:#a0a0a0"></div>
<div class="a" style="left:55px;top:468px;width:867px;height:21px;background:#ffffff"></div>
<div class="a" style="left:55px;top:489px;width:867px;height:1px;background:#a0a0a0"></div>
<div class="a" style="left:98px;top:468px;width:1px;height:22px;background:#a0a0a0"></div>
<div class="a" style="left:158px;top:468px;width:1px;height:22px;background:#a0a0a0"></div>
<div class="a" style="left:278px;top:468px;width:1px;height:22px;background:#a0a0a0"></div>
<div class="a" style="left:358px;top:468px;width:1px;height:22px;background:#a0a0a0"></div>
<div class="a" style="left:596px;top:468px;width:1px;height:22px;background:#a0a0a0"></div>
<div class="a" style="left:676px;top:468px;width:1px;height:22px;background:#a0a0a0"></div>
<div class="a" style="left:726px;top:468px;width:1px;height:22px;background:#a0a0a0"></div>
<div class="a" style="left:761px;top:468px;width:1px;height:22px;background:#a0a0a0"></div>
<div class="a" style="left:841px;top:468px;width:1px;height:22px;background:#a0a0a0"></div>
<div class="chk on" style="left:70px;top:472px"></div>
<svg class="a" style="left:70px;top:472px" width="13" height="13" viewBox="0 0 13 13"><path d="M3.2 6.8 L5.4 9 L9.8 4.2" fill="none" stroke="#fff" stroke-width="1.1"/></svg>
<div class="a" style="left:98px;top:489px;width:180px;height:1px;background:#6eaee0"></div>
<div class="a" style="left:98px;top:468px;width:1px;height:22px;background:#8dbde0"></div>
<div class="a" style="left:158px;top:468px;width:1px;height:22px;background:#6eaee0"></div>
<div class="a" style="left:278px;top:468px;width:1px;height:22px;background:#98a8b4"></div>
<div class="a" style="left:99px;top:468px;width:59px;height:21px;background:#fff;border:1px solid #2a6eaa"></div>
<div class="t g" style="left:102px;top:472px">3</div>
<div class="a" style="left:145px;top:476px"><svg width="9" height="5" viewBox="0 0 9 5"><path d="M0.5 0.5 L4.5 4.5 L8.5 0.5" fill="none" stroke="#444" stroke-width="1"/></svg></div>
<div class="a" style="left:159px;top:468px;width:119px;height:21px;background:#fff;border:1px solid #2a6eaa"></div>
<div class="t g" style="left:162px;top:472px">Tiivisteet</div>
<div class="a" style="left:265px;top:476px"><svg width="9" height="5" viewBox="0 0 9 5"><path d="M0.5 0.5 L4.5 4.5 L8.5 0.5" fill="none" stroke="#444" stroke-width="1"/></svg></div>
<div class="t g" style="left:282px;top:472px">011</div>
<div class="t g" style="left:362px;top:472px">Tiivistemassa Loctite 5188</div>
<div class="t g" style="left:597px;top:472px;width:75px;text-align:right">24,00</div>
<div class="t g" style="left:677px;top:472px;width:45px;text-align:right">25,5</div>
<div class="t g" style="left:729px;top:472px">kpl</div>
<div class="t g" style="left:762px;top:472px;width:75px;text-align:right">30,12</div>
<div class="a" style="left:14px;top:490px;width:40px;height:21px;background:#fff"></div>
<div class="a" style="left:16px;top:511px;width:37px;height:1px;background:#e4e4e4"></div>
<div class="a" style="left:54px;top:490px;width:1px;height:22px;background:#a0a0a0"></div>
<div class="a" style="left:55px;top:490px;width:867px;height:21px;background:#add8e6"></div>
<div class="a" style="left:55px;top:511px;width:867px;height:1px;background:#a0a0a0"></div>
<div class="a" style="left:98px;top:490px;width:1px;height:22px;background:#a0a0a0"></div>
<div class="a" style="left:158px;top:490px;width:1px;height:22px;background:#a0a0a0"></div>
<div class="a" style="left:278px;top:490px;width:1px;height:22px;background:#a0a0a0"></div>
<div class="a" style="left:358px;top:490px;width:1px;height:22px;background:#a0a0a0"></div>
<div class="a" style="left:596px;top:490px;width:1px;height:22px;background:#a0a0a0"></div>
<div class="a" style="left:676px;top:490px;width:1px;height:22px;background:#a0a0a0"></div>
<div class="a" style="left:726px;top:490px;width:1px;height:22px;background:#a0a0a0"></div>
<div class="a" style="left:761px;top:490px;width:1px;height:22px;background:#a0a0a0"></div>
<div class="a" style="left:841px;top:490px;width:1px;height:22px;background:#a0a0a0"></div>
<div class="chk" style="left:70px;top:494px"></div>
<div class="a" style="left:98px;top:511px;width:180px;height:1px;background:#6eaee0"></div>
<div class="a" style="left:98px;top:490px;width:1px;height:22px;background:#8dbde0"></div>
<div class="a" style="left:158px;top:490px;width:1px;height:22px;background:#6eaee0"></div>
<div class="a" style="left:278px;top:490px;width:1px;height:22px;background:#98a8b4"></div>
<div class="a" style="left:99px;top:490px;width:59px;height:21px;background:#fff;border:1px solid #2a6eaa"></div>
<div class="t g" style="left:102px;top:494px">99</div>
<div class="a" style="left:145px;top:498px"><svg width="9" height="5" viewBox="0 0 9 5"><path d="M0.5 0.5 L4.5 4.5 L8.5 0.5" fill="none" stroke="#444" stroke-width="1"/></svg></div>
<div class="a" style="left:159px;top:490px;width:119px;height:21px;background:#fff;border:1px solid #2a6eaa"></div>
<div class="t g" style="left:162px;top:494px">Sekalaiset</div>
<div class="a" style="left:265px;top:498px"><svg width="9" height="5" viewBox="0 0 9 5"><path d="M0.5 0.5 L4.5 4.5 L8.5 0.5" fill="none" stroke="#444" stroke-width="1"/></svg></div>
<div class="t g" style="left:282px;top:494px">012</div>
<div class="t g" style="left:362px;top:494px">Laakeri 6205-2RS</div>
<div class="t g" style="left:597px;top:494px;width:75px;text-align:right">8,50</div>
<div class="t g" style="left:677px;top:494px;width:45px;text-align:right">25,5</div>
<div class="t g" style="left:729px;top:494px">kpl</div>
<div class="t g" style="left:762px;top:494px;width:75px;text-align:right">10,67</div>
<div class="a" style="left:14px;top:512px;width:40px;height:21px;background:#fff"></div>
<div class="a" style="left:16px;top:533px;width:37px;height:1px;background:#e4e4e4"></div>
<div class="a" style="left:54px;top:512px;width:1px;height:22px;background:#a0a0a0"></div>
<div class="a" style="left:55px;top:512px;width:867px;height:21px;background:#ffffff"></div>
<div class="a" style="left:55px;top:533px;width:867px;height:1px;background:#a0a0a0"></div>
<div class="a" style="left:98px;top:512px;width:1px;height:22px;background:#a0a0a0"></div>
<div class="a" style="left:158px;top:512px;width:1px;height:22px;background:#a0a0a0"></div>
<div class="a" style="left:278px;top:512px;width:1px;height:22px;background:#a0a0a0"></div>
<div class="a" style="left:358px;top:512px;width:1px;height:22px;background:#a0a0a0"></div>
<div class="a" style="left:596px;top:512px;width:1px;height:22px;background:#a0a0a0"></div>
<div class="a" style="left:676px;top:512px;width:1px;height:22px;background:#a0a0a0"></div>
<div class="a" style="left:726px;top:512px;width:1px;height:22px;background:#a0a0a0"></div>
<div class="a" style="left:761px;top:512px;width:1px;height:22px;background:#a0a0a0"></div>
<div class="a" style="left:841px;top:512px;width:1px;height:22px;background:#a0a0a0"></div>
<div class="chk" style="left:70px;top:516px"></div>
<div class="a" style="left:98px;top:533px;width:180px;height:1px;background:#6eaee0"></div>
<div class="a" style="left:98px;top:512px;width:1px;height:22px;background:#8dbde0"></div>
<div class="a" style="left:158px;top:512px;width:1px;height:22px;background:#6eaee0"></div>
<div class="a" style="left:278px;top:512px;width:1px;height:22px;background:#98a8b4"></div>
<div class="a" style="left:99px;top:512px;width:59px;height:21px;background:#fff;border:1px solid #2a6eaa"></div>
<div class="t g" style="left:102px;top:516px">99</div>
<div class="a" style="left:145px;top:520px"><svg width="9" height="5" viewBox="0 0 9 5"><path d="M0.5 0.5 L4.5 4.5 L8.5 0.5" fill="none" stroke="#444" stroke-width="1"/></svg></div>
<div class="a" style="left:159px;top:512px;width:119px;height:21px;background:#fff;border:1px solid #2a6eaa"></div>
<div class="t g" style="left:162px;top:516px">Sekalaiset</div>
<div class="a" style="left:265px;top:520px"><svg width="9" height="5" viewBox="0 0 9 5"><path d="M0.5 0.5 L4.5 4.5 L8.5 0.5" fill="none" stroke="#444" stroke-width="1"/></svg></div>
<div class="t g" style="left:282px;top:516px">013</div>
<div class="t g" style="left:362px;top:516px">Hydrauliletku DN12</div>
<div class="t g" style="left:597px;top:516px;width:75px;text-align:right">14,50</div>
<div class="t g" style="left:677px;top:516px;width:45px;text-align:right">25,5</div>
<div class="t g" style="left:729px;top:516px">m</div>
<div class="t g" style="left:762px;top:516px;width:75px;text-align:right">18,20</div>
<div class="a" style="left:14px;top:534px;width:40px;height:21px;background:#fff"></div>
<div class="a" style="left:16px;top:555px;width:37px;height:1px;background:#e4e4e4"></div>
<div class="a" style="left:54px;top:534px;width:1px;height:22px;background:#a0a0a0"></div>
<div class="a" style="left:55px;top:534px;width:867px;height:21px;background:#add8e6"></div>
<div class="a" style="left:55px;top:555px;width:867px;height:1px;background:#a0a0a0"></div>
<div class="a" style="left:98px;top:534px;width:1px;height:22px;background:#a0a0a0"></div>
<div class="a" style="left:158px;top:534px;width:1px;height:22px;background:#a0a0a0"></div>
<div class="a" style="left:278px;top:534px;width:1px;height:22px;background:#a0a0a0"></div>
<div class="a" style="left:358px;top:534px;width:1px;height:22px;background:#a0a0a0"></div>
<div class="a" style="left:596px;top:534px;width:1px;height:22px;background:#a0a0a0"></div>
<div class="a" style="left:676px;top:534px;width:1px;height:22px;background:#a0a0a0"></div>
<div class="a" style="left:726px;top:534px;width:1px;height:22px;background:#a0a0a0"></div>
<div class="a" style="left:761px;top:534px;width:1px;height:22px;background:#a0a0a0"></div>
<div class="a" style="left:841px;top:534px;width:1px;height:22px;background:#a0a0a0"></div>
<div class="chk" style="left:70px;top:538px"></div>
<div class="a" style="left:98px;top:555px;width:180px;height:1px;background:#6eaee0"></div>
<div class="a" style="left:98px;top:534px;width:1px;height:22px;background:#8dbde0"></div>
<div class="a" style="left:158px;top:534px;width:1px;height:22px;background:#6eaee0"></div>
<div class="a" style="left:278px;top:534px;width:1px;height:22px;background:#98a8b4"></div>
<div class="a" style="left:99px;top:534px;width:59px;height:21px;background:#fff;border:1px solid #2a6eaa"></div>
<div class="t g" style="left:102px;top:538px">99</div>
<div class="a" style="left:145px;top:542px"><svg width="9" height="5" viewBox="0 0 9 5"><path d="M0.5 0.5 L4.5 4.5 L8.5 0.5" fill="none" stroke="#444" stroke-width="1"/></svg></div>
<div class="a" style="left:159px;top:534px;width:119px;height:21px;background:#fff;border:1px solid #2a6eaa"></div>
<div class="t g" style="left:162px;top:538px">Sekalaiset</div>
<div class="a" style="left:265px;top:542px"><svg width="9" height="5" viewBox="0 0 9 5"><path d="M0.5 0.5 L4.5 4.5 L8.5 0.5" fill="none" stroke="#444" stroke-width="1"/></svg></div>
<div class="t g" style="left:282px;top:538px">014</div>
<div class="t g" style="left:362px;top:538px">Kumimatto 10mm</div>
<div class="t g" style="left:597px;top:538px;width:75px;text-align:right">18,00</div>
<div class="t g" style="left:677px;top:538px;width:45px;text-align:right">25,5</div>
<div class="t g" style="left:729px;top:538px">m²</div>
<div class="t g" style="left:762px;top:538px;width:75px;text-align:right">22,59</div>
<div class="a" style="left:13px;top:213px;width:910px;height:361px;border:1px solid #000;box-shadow:0 0 0 1px #fff, inset 1px 1px 0 #a8a8a8, inset -1px -1px 0 #c4c4c4"></div>
<div class="tb" style="left:610px;top:585px;width:54px;height:20px"></div>
<div class="t" style="left:613px;top:588px;width:50px;text-align:right">100</div>
<div class="t" style="left:674px;top:588px;letter-spacing:-0.3px">Rivejä / sivu</div>
<div class="t" style="left:793px;top:588px">Sivu:</div>
<div class="a" style="left:826px;top:585px;width:54px;height:20px;border:1px solid #a8a8a8;background:#fff"></div>
<div class="t" style="left:828px;top:588px;width:34px;text-align:right">1</div>
<div class="a" style="left:864px;top:586px;width:14px;height:9px;background:#fafafa;border:1px solid #dcdcdc;border-bottom-color:#c4c4c4"></div>
<div class="a" style="left:864px;top:595px;width:14px;height:9px;background:#fafafa;border:1px solid #dcdcdc;border-top-color:#c4c4c4"></div>
<svg class="a" style="left:868px;top:589px" width="5" height="3" viewBox="0 0 5 3"><path d="M0 3 L2.5 0 L5 3Z" fill="#000"/></svg>
<svg class="a" style="left:868px;top:597px" width="5" height="3" viewBox="0 0 5 3"><path d="M0 0 L2.5 3 L5 0Z" fill="#000"/></svg>
<div class="t" style="left:886px;top:588px">/ 1</div>
<div class="a" style="left:2px;top:616px;width:932px;height:1px;background:#dadada"></div>
<div class="a" style="left:2px;top:617px;width:932px;height:20px;background:#f0f0f0;border-top:1px solid #fafafa;border-radius:0 0 5px 5px"></div>
<div class="a" style="left:930px;top:625px;width:2px;height:2px;background:#8a8a8a"></div>
<div class="a" style="left:926px;top:629px;width:2px;height:2px;background:#8a8a8a"></div>
<div class="a" style="left:930px;top:629px;width:2px;height:2px;background:#8a8a8a"></div>
<div class="a" style="left:922px;top:633px;width:2px;height:2px;background:#8a8a8a"></div>
<div class="a" style="left:926px;top:633px;width:2px;height:2px;background:#8a8a8a"></div>
<div class="a" style="left:930px;top:633px;width:2px;height:2px;background:#8a8a8a"></div>
</body></html>
